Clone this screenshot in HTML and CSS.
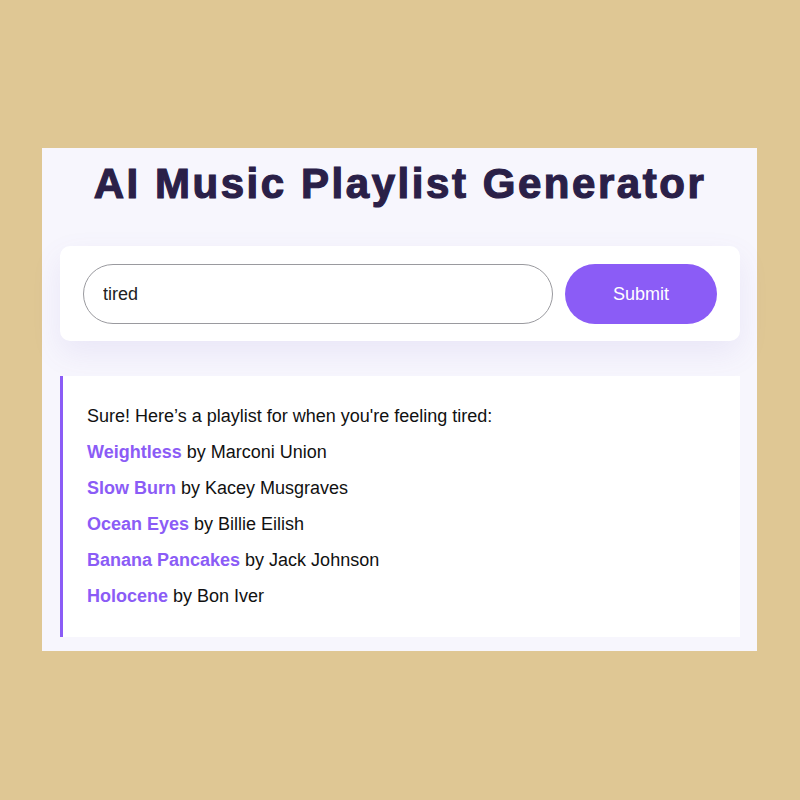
FILE: index.html
```html
<!DOCTYPE html>
<html>
<head>
<meta charset="utf-8">
<link rel="stylesheet" href="styles.css">
</head>
<body>
<main class="card">
  <h1 class="title">AI Music Playlist Generator</h1>
  <form class="form-card">
    <input class="mood-input" type="text" value="tired">
    <button class="submit-btn" type="button">Submit</button>
  </form>
  <section class="results">
    <div class="line">Sure! Here’s a playlist for when you're feeling tired:</div>
    <div class="line"><span class="song">Weightless</span> by Marconi Union</div>
    <div class="line"><span class="song">Slow Burn</span> by Kacey Musgraves</div>
    <div class="line"><span class="song">Ocean Eyes</span> by Billie Eilish</div>
    <div class="line"><span class="song">Banana Pancakes</span> by Jack Johnson</div>
    <div class="line"><span class="song">Holocene</span> by Bon Iver</div>
  </section>
</main>
</body>
</html>
```

FILE: styles.css
```css
* { box-sizing: border-box; }
html, body { margin: 0; padding: 0; }
body {
  background: #dfc794;
  height: 100vh;
  display: flex;
  align-items: center;
  justify-content: center;
  padding: 0 1px 1px 0;
  font-family: "Liberation Sans", Arial, sans-serif;
}
.card {
  width: 715px;
  height: 503px;
  background: #f7f6fd;
  padding: 12px 17px 14px 18px;
  display: flex;
  flex-direction: column;
}
.title {
  margin: 0;
  text-align: center;
  font-size: 42px;
  line-height: 48px;
  font-weight: 700;
  letter-spacing: 2.55px;
  color: #2a2048;
  -webkit-text-stroke: 1.2px #2a2048;
}
.form-card {
  margin: 38px 0 0;
  background: #fff;
  border-radius: 10px;
  padding: 18px 23px 17px;
  display: flex;
  gap: 12px;
  box-shadow: 0 12px 30px rgba(120, 100, 200, 0.10);
}
.mood-input {
  flex: 1;
  height: 60px;
  border: 1px solid #9a9a9f;
  border-radius: 30px;
  padding: 0 19px;
  font-family: "Liberation Sans", Arial, sans-serif;
  font-size: 18px;
  color: #222;
  outline: none;
  background: #fff;
}
.submit-btn {
  width: 152px;
  height: 60px;
  border: none;
  border-radius: 30px;
  background: #8b5cf6;
  color: #fff;
  font-family: "Liberation Sans", Arial, sans-serif;
  font-size: 18px;
}
.results {
  margin-top: 35px;
  background: #fff;
  border-left: 3px solid #8b5cf6;
  padding: 22px 24px 22px;
  flex: 1;
}
.line {
  font-size: 18px;
  line-height: 36px;
  color: #111;
}
.song {
  color: #8b5cf6;
  font-weight: 700;
}
```
